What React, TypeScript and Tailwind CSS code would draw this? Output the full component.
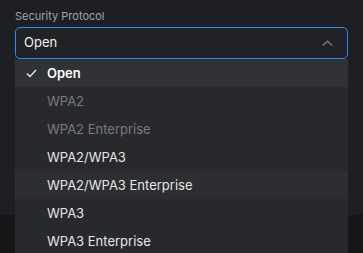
import React from "react";

type Option = {
  label: string;
  disabled?: boolean;
};

const options: Option[] = [
  { label: "Open" },
  { label: "WPA2", disabled: true },
  { label: "WPA2 Enterprise", disabled: true },
  { label: "WPA2/WPA3" },
  { label: "WPA2/WPA3 Enterprise" },
  { label: "WPA3" },
  { label: "WPA3 Enterprise" },
];

const selected = "Open";
const hovered = "WPA2/WPA3 Enterprise";

export default function App() {
  return (
    <div
      className="h-[253px] w-[363px] overflow-hidden bg-[#151618]"
      style={{ fontFamily: "Inter, 'Noto Sans', sans-serif" }}
    >
      <div className="h-[215px] rounded-b-[4px] bg-[#1e1f22] px-[15px] pt-[7px]">
        <div className="text-[11px] leading-[18px] text-[#a3a4a9]">Security Protocol</div>
        <div className="mt-[2px] flex h-[32px] items-center justify-between rounded-[5px] border border-[#3b82f6] bg-[#212226] pl-[8px] pr-[14px] text-[13px] text-[#f1f1f2]">
          <span>Open</span>
          <svg width="11" height="6" viewBox="0 0 11 6" fill="none">
            <path d="M0.8 5.5L5.5 1.2L10.2 5.5" stroke="#7b7c80" strokeWidth="1.4" />
          </svg>
        </div>
        <div className="flex flex-col bg-[#27292d]">
          {options.map((o) => {
            const isSel = o.label === selected;
            const bg = isSel
              ? "bg-[#303236]"
              : o.label === hovered
              ? "bg-[#2c2e32]"
              : "";
            const color = o.disabled ? "text-[#7a7b80]" : "text-[#e6e6e8]";
            return (
              <div
                key={o.label}
                className={`flex h-[28px] items-center pt-[1px] text-[13px] ${bg} ${color}`}
              >
                <span className="flex w-[32px] justify-end pr-[10px]">
                  {isSel && (
                    <svg width="11" height="9" viewBox="0 0 11 9" fill="none">
                      <path d="M1 4.5L4 7.5L10 1" stroke="#e6e6e8" strokeWidth="1.4" />
                    </svg>
                  )}
                </span>
                <span className={isSel ? "font-semibold text-white" : ""}>{o.label}</span>
              </div>
            );
          })}
        </div>
      </div>
    </div>
  );
}
